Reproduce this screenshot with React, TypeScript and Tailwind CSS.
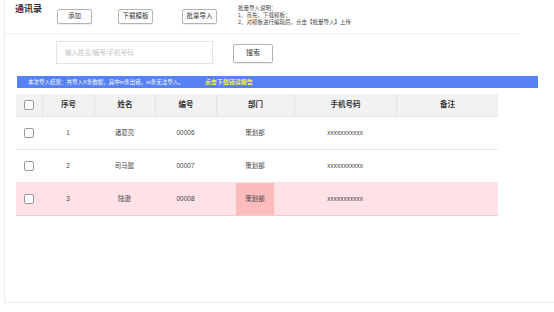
import { Fragment } from 'react';

const rows = [
  { no: '1', name: '诸葛亮', code: '00006', dept: '策划部', phone: 'xxxxxxxxxxx', error: false },
  { no: '2', name: '司马懿', code: '00007', dept: '策划部', phone: 'xxxxxxxxxxx', error: false },
  { no: '3', name: '陆逊', code: '00008', dept: '策划部', phone: 'xxxxxxxxxxx', error: true },
];

const cols = ['序号', '姓名', '编号', '部门', '手机号码', '备注'];

function Checkbox() {
  return <span className="block w-[10px] h-[10px] rounded-[2px] border border-[#9a9a9a] bg-white" />;
}

function Btn({ label, w = 'w-[35px]' }: { label: string; w?: string }) {
  return (
    <button className={`${w} h-[15px] rounded-[2px] border border-[#b4b4b4] bg-white shadow-[0_1px_1px_rgba(0,0,0,0.08)] text-[6.5px] text-[#333] leading-none flex items-center justify-center`}>
      {label}
    </button>
  );
}

export default function App() {
  return (
    <div className="w-[554px] h-[312px] bg-white overflow-hidden text-[#333] font-['Liberation_Sans','Noto_Sans_CJK_SC',sans-serif]">
      <div className="ml-[4px] h-[303px] border-l border-b border-[#ececec] flex flex-col">
        {/* Top bar */}
        <div className="h-[29px] mr-[34px] flex items-start border-b border-[#f0f0f0] pl-[10px] box-content pb-[4px]">
          <div className="w-[42px] pt-[4px] text-[9px] font-bold leading-[11px]">通讯录</div>
          <div className="pt-[9px] flex">
            <Btn label="添加" />
            <div className="ml-[26px]">
              <Btn label="下载模板" />
            </div>
            <div className="ml-[29px]">
              <Btn label="批量导入" />
            </div>
          </div>
          <div className="ml-[21px] pt-[5px] text-[5.5px] leading-[7px] text-[#444]">
            <div>批量导入说明：</div>
            <div>1、首先，下载模板；</div>
            <div>2、对模板进行编辑后，点击【批量导入】上传</div>
          </div>
        </div>

        {/* Search */}
        <div className="mt-[7px] ml-[51px] flex items-center">
          <div className="w-[157px] h-[23px] border border-[#e6e0e8] bg-white flex items-center pl-[8px] text-[6.5px] text-[#c4c4c4]">
            输入姓名/编号/手机号码
          </div>
          <button className="ml-[20px] mt-[2px] w-[40px] h-[19px] rounded-[2px] border border-[#b4b4b4] bg-white shadow-[0_1px_1px_rgba(0,0,0,0.08)] text-[7px] text-[#333] flex items-center justify-center">
            搜索
          </button>
        </div>

        {/* Result banner */}
        <div className="mt-[12px] ml-[12px] w-[521px] h-[12px] bg-[#5782f6] flex items-center pl-[11px] text-[5.5px] text-white">
          <span>本次导入结果：共导入X条数据，其中m条出错，m条无法导入。</span>
          <span className="ml-[21px] text-[6px] font-bold text-[#f3ea48]">点击下载错误报告</span>
        </div>

        {/* Table */}
        <div className="mt-[6px] ml-[11px] w-[482px] grid grid-cols-[26px_52px_61px_61px_78px_102px_102px]">
          <div className="h-[23px] bg-[#f2f2f2] border-b border-[#e4e4e4] flex items-center justify-center">
            <Checkbox />
          </div>
          {cols.map((c) => (
            <div key={c} className="h-[23px] bg-[#f2f2f2] border-b border-l border-[#e4e4e4] flex items-center justify-center text-[7.5px] font-semibold text-[#333]">
              {c}
            </div>
          ))}
          {rows.map((r) => {
            const cell = `h-[33px] flex items-center justify-center text-[6.5px] text-[#444] border-b ${r.error ? 'bg-[#fee2e5] border-[#f3c9cd]' : 'bg-white border-[#e8e8e8]'}`;
            return (
              <Fragment key={r.no}>
                <div className={cell}>
                  <Checkbox />
                </div>
                <div className={cell}>{r.no}</div>
                <div className={cell}>{r.name}</div>
                <div className={cell}>{r.code}</div>
                <div className={cell}>
                  {r.error ? (
                    <div className="w-[38px] h-full bg-[#fcbcbe] flex items-center justify-center">{r.dept}</div>
                  ) : (
                    r.dept
                  )}
                </div>
                <div className={cell}>{r.phone}</div>
                <div className={cell} />
              </Fragment>
            );
          })}
        </div>
      </div>
    </div>
  );
}
